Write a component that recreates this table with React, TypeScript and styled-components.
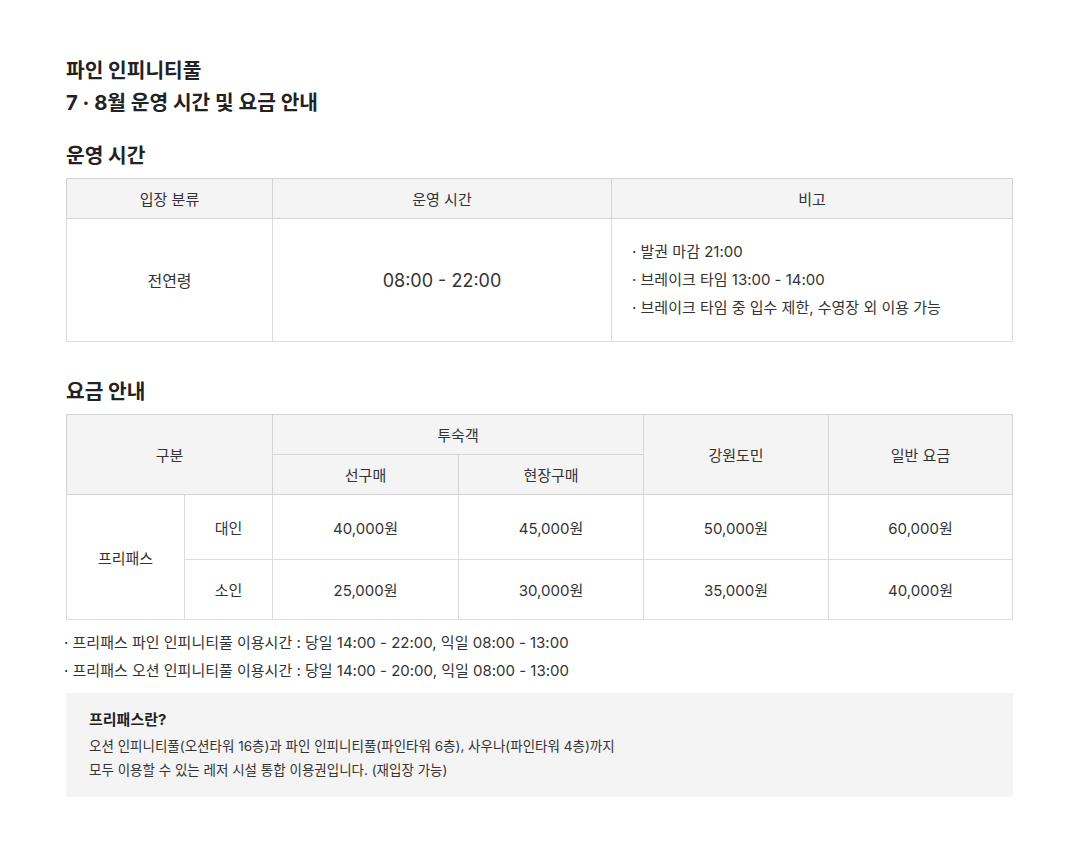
import React from "react";
import styled, { createGlobalStyle } from "styled-components";

const GlobalStyle = createGlobalStyle`
  html, body { margin: 0; padding: 0; background: #fff; }
  body {
    font-family: "Inter", "Noto Sans CJK KR", "Noto Sans", sans-serif;
    color: #222;
    -webkit-font-smoothing: antialiased;
  }
`;

const Page = styled.main`
  width: 947px;
  padding: 55px 0 40px 66px;
`;

const Title = styled.h1`
  margin: 0;
  font-size: 20.3px;
  line-height: 32px;
  font-weight: 700;
  color: #222;
`;

const SectionTitle = styled.h2<{ $top: number }>`
  margin: ${(p) => p.$top}px 0 7px;
  font-size: 20.3px;
  line-height: 30px;
  font-weight: 700;
  color: #222;
`;

const Table = styled.table`
  width: 100%;
  border-collapse: collapse;
  table-layout: fixed;
  border: 1px solid #cfcfcf;
  font-size: 15px;
  color: #333;
`;

const Th = styled.th<{ $h?: number }>`
  background: #f4f4f4;
  font-weight: 400;
  height: ${(p) => p.$h ?? 39}px;
  padding: 0;
  border: 1px solid #d4d4d4;
  text-align: center;
  color: #333;
`;

const Td = styled.td<{ $h?: number; $size?: number }>`
  height: ${(p) => p.$h ?? 60}px;
  padding: 0;
  border: 1px solid #dcdcdc;
  border-top-color: #d0d0d0;
  text-align: center;
  font-size: ${(p) => p.$size ?? 15}px;
  color: #333;
`;

const NoteCell = styled.td`
  padding: 0 20px;
  border: 1px solid #dcdcdc;
  text-align: left;
  vertical-align: middle;
`;

const NoteList = styled.ul`
  margin: 0;
  padding: 0;
  list-style: none;
  font-size: 15px;
  line-height: 28px;
  color: #333;
`;

const NoteItem = styled.li`
  &::before {
    content: "· ";
  }
`;

const FootNotes = styled.ul`
  margin: 9px 0 0 -2px;
  padding: 0;
  list-style: none;
  font-size: 15px;
  line-height: 28px;
  color: #333;
`;

const InfoBox = styled.div`
  margin-top: 8px;
  background: #f4f4f4;
  padding: 15px 23px 15px;
`;

const InfoTitle = styled.strong`
  display: block;
  font-size: 15px;
  line-height: 24px;
  font-weight: 700;
  color: #222;
  margin-bottom: 2px;
`;

const InfoText = styled.p`
  margin: 0;
  font-size: 13.5px;
  line-height: 24px;
  color: #333;
`;

export default function App() {
  return (
    <>
      <GlobalStyle />
      <Page>
        <Title>
          파인 인피니티풀
          <br />7 · 8월 운영 시간 및 요금 안내
        </Title>

        <SectionTitle $top={22}>운영 시간</SectionTitle>
        <Table>
          <colgroup>
            <col style={{ width: 206 }} />
            <col style={{ width: 339 }} />
            <col />
          </colgroup>
          <thead>
            <tr>
              <Th>입장 분류</Th>
              <Th>운영 시간</Th>
              <Th>비고</Th>
            </tr>
          </thead>
          <tbody>
            <tr>
              <Td $h={122} $size={16}>전연령</Td>
              <Td $h={122} $size={18}>08:00 - 22:00</Td>
              <NoteCell>
                <NoteList>
                  <NoteItem>발권 마감 21:00</NoteItem>
                  <NoteItem>브레이크 타임 13:00 - 14:00</NoteItem>
                  <NoteItem>브레이크 타임 중 입수 제한, 수영장 외 이용 가능</NoteItem>
                </NoteList>
              </NoteCell>
            </tr>
          </tbody>
        </Table>

        <SectionTitle $top={35}>요금 안내</SectionTitle>
        <Table>
          <colgroup>
            <col style={{ width: 118 }} />
            <col style={{ width: 88 }} />
            <col style={{ width: 186 }} />
            <col style={{ width: 185 }} />
            <col style={{ width: 185 }} />
            <col />
          </colgroup>
          <thead>
            <tr>
              <Th colSpan={2} rowSpan={2}>구분</Th>
              <Th colSpan={2}>투숙객</Th>
              <Th rowSpan={2}>강원도민</Th>
              <Th rowSpan={2}>일반 요금</Th>
            </tr>
            <tr>
              <Th>선구매</Th>
              <Th>현장구매</Th>
            </tr>
          </thead>
          <tbody>
            <tr>
              <Td rowSpan={2}>프리패스</Td>
              <Td $h={64}>대인</Td>
              <Td $h={64}>40,000원</Td>
              <Td $h={64}>45,000원</Td>
              <Td $h={64}>50,000원</Td>
              <Td $h={64}>60,000원</Td>
            </tr>
            <tr>
              <Td $h={59}>소인</Td>
              <Td $h={59}>25,000원</Td>
              <Td $h={59}>30,000원</Td>
              <Td $h={59}>35,000원</Td>
              <Td $h={59}>40,000원</Td>
            </tr>
          </tbody>
        </Table>

        <FootNotes>
          <NoteItem>프리패스 파인 인피니티풀 이용시간 : 당일 14:00 - 22:00, 익일 08:00 - 13:00</NoteItem>
          <NoteItem>프리패스 오션 인피니티풀 이용시간 : 당일 14:00 - 20:00, 익일 08:00 - 13:00</NoteItem>
        </FootNotes>

        <InfoBox>
          <InfoTitle>프리패스란?</InfoTitle>
          <InfoText>오션 인피니티풀(오션타워 16층)과 파인 인피니티풀(파인타워 6층), 사우나(파인타워 4층)까지</InfoText>
          <InfoText>모두 이용할 수 있는 레저 시설 통합 이용권입니다. (재입장 가능)</InfoText>
        </InfoBox>
      </Page>
    </>
  );
}
